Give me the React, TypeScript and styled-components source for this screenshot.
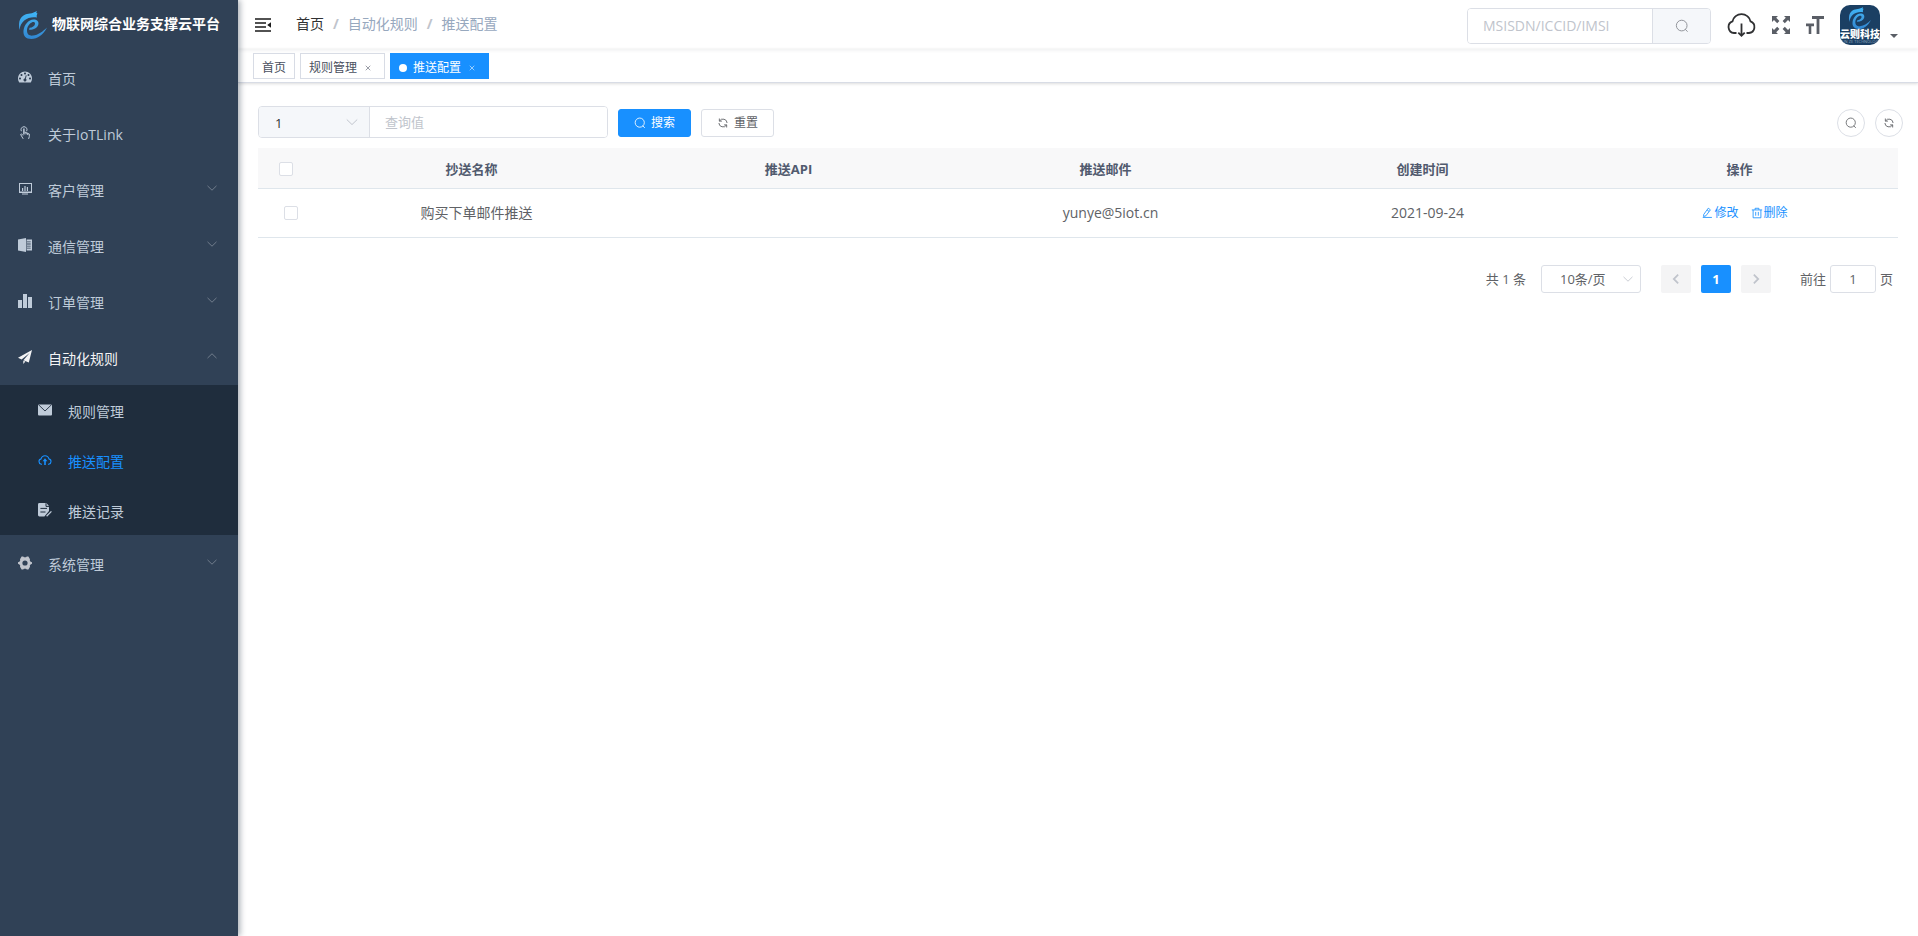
import React from "react";
import styled, { createGlobalStyle, css } from "styled-components";

const BLUE = "#1890ff";
const BORDER = "#dcdfe6";
const SIDE_TEXT = "#bfcbd9";

const GlobalStyle = createGlobalStyle`
  *, *::before, *::after { box-sizing: border-box; }
  body {
    margin: 0;
    background: #fff;
    color: #606266;
    font-family: "Open Sans", "Noto Sans CJK SC", sans-serif;
    font-size: 14px;
    line-height: 20px;
  }
  button, input, select { font: inherit; color: inherit; margin: 0; }
  button { cursor: pointer; }
  a { color: inherit; text-decoration: none; }
  ul, ol { list-style: none; margin: 0; padding: 0; }
  svg { display: block; flex: none; }
`;

/* ---------- icons ---------- */

type IconProps = { size?: number };

const stroked = (d: string, width = 64) =>
  function StrokedIcon({ size = 14 }: IconProps) {
    return (
      <svg width={size} height={size} viewBox="0 0 1024 1024" fill="none" stroke="currentColor" strokeWidth={width} aria-hidden="true">
        <path d={d} />
      </svg>
    );
  };

const SearchIcon = stroked("M100 480a390 390 0 1 0 780 0a390 390 0 1 0-780 0M745 745L920 930", 72);
const RefreshIcon = stroked("M200 130V350H420M210 350A350 350 0 0 1 862 512M824 894V674H604M814 674A350 350 0 0 1 162 512", 76);
const ArrowDown = stroked("M130 330L512 700L894 330", 72);
const ArrowUp = stroked("M130 690L512 320L894 690", 72);
const ChevronLeft = stroked("M670 200L350 512L670 824", 128);
const ChevronRight = stroked("M354 200L674 512L354 824", 128);
const EditIcon = stroked("M150 890H930M230 640L620 100L800 240L420 750L220 810ZM520 250L690 380", 72);
const TrashIcon = stroked("M70 250H954M350 240V110H674V240M180 250V920H844V250M400 420V740M624 420V740", 72);
const CloseIcon = stroked("M280 280L744 744M744 280L280 744", 80);

const DashboardIcon = () => (
  <svg width="14" height="14" viewBox="0 0 128 100" fill="currentColor" aria-hidden="true">
    <path d="M27.429 63.638c0-2.508-.893-4.65-2.679-6.424-1.786-1.775-3.94-2.662-6.464-2.662-2.524 0-4.679.887-6.465 2.662-1.785 1.774-2.678 3.916-2.678 6.424 0 2.508.893 4.65 2.678 6.424 1.786 1.775 3.94 2.662 6.465 2.662 2.524 0 4.678-.887 6.464-2.662 1.786-1.775 2.679-3.916 2.679-6.424zm13.714-31.801c0-2.508-.893-4.65-2.679-6.424-1.785-1.775-3.94-2.662-6.464-2.662-2.524 0-4.679.887-6.464 2.662-1.786 1.774-2.679 3.916-2.679 6.424 0 2.508.893 4.65 2.679 6.424 1.785 1.774 3.94 2.662 6.464 2.662 2.524 0 4.679-.888 6.464-2.662 1.786-1.775 2.679-3.916 2.679-6.424zM71.714 65.98l7.215-27.116c.285-1.23.107-2.378-.536-3.443-.643-1.064-1.56-1.762-2.75-2.094-1.19-.33-2.333-.177-3.429.462-1.095.639-1.81 1.573-2.143 2.804l-7.214 27.116c-2.857.237-5.405 1.266-7.643 3.088-2.238 1.822-3.738 4.152-4.5 6.992-.952 3.644-.476 7.098 1.429 10.364 1.905 3.265 4.69 5.37 8.357 6.317 3.667.947 7.143.474 10.429-1.42 3.285-1.892 5.404-4.66 6.357-8.305.762-2.84.619-5.607-.429-8.305-1.047-2.697-2.762-4.85-5.143-6.46zm47.143-2.342c0-2.508-.893-4.65-2.678-6.424-1.786-1.775-3.94-2.662-6.465-2.662-2.524 0-4.678.887-6.464 2.662-1.786 1.774-2.679 3.916-2.679 6.424 0 2.508.893 4.65 2.679 6.424 1.786 1.775 3.94 2.662 6.464 2.662 2.524 0 4.679-.887 6.465-2.662 1.785-1.775 2.678-3.916 2.678-6.424zm-45.714-45.43c0-2.509-.893-4.65-2.679-6.425C68.68 10.01 66.524 9.122 64 9.122c-2.524 0-4.679.887-6.464 2.661-1.786 1.775-2.679 3.916-2.679 6.425 0 2.508.893 4.65 2.679 6.424 1.785 1.774 3.94 2.662 6.464 2.662 2.524 0 4.679-.888 6.464-2.662 1.786-1.775 2.679-3.916 2.679-6.424zm32 13.629c0-2.508-.893-4.65-2.679-6.424-1.785-1.775-3.94-2.662-6.464-2.662-2.524 0-4.679.887-6.464 2.662-1.786 1.774-2.679 3.916-2.679 6.424 0 2.508.893 4.65 2.679 6.424 1.785 1.774 3.94 2.662 6.464 2.662 2.524 0 4.679-.888 6.464-2.662 1.786-1.775 2.679-3.916 2.679-6.424zM128 63.638c0 12.351-3.357 23.78-10.071 34.286-.905 1.372-2.19 2.058-3.858 2.058H13.93c-1.667 0-2.953-.686-3.858-2.058C3.357 87.465 0 76.037 0 63.638c0-8.613 1.69-16.847 5.071-24.703C8.452 31.08 13 24.312 18.714 18.634c5.715-5.68 12.524-10.199 20.429-13.559C47.048 1.715 55.333.035 64 .035c8.667 0 16.952 1.68 24.857 5.04 7.905 3.36 14.714 7.88 20.429 13.559 5.714 5.678 10.262 12.446 13.643 20.301 3.38 7.856 5.071 16.09 5.071 24.703z" />
  </svg>
);

const TouchIcon = () => (
  <svg width="14" height="14" viewBox="0 0 14 14" fill="none" stroke="currentColor" aria-hidden="true">
    <path d="M3.4 5.2A3 3 0 1 1 8.6 5.2" strokeWidth="1" />
    <path d="M5.9 2.6V8.6" strokeWidth="1.5" />
    <path d="M5 9.5L3.6 7.9L2.6 8.5L5.2 12.8M6.6 6.2L8 6.4V8.4M8 6.8L9.7 7.1V9M9.7 7.5L11.3 8V10.6L10.6 12.9" strokeWidth="1" />
  </svg>
);

const MonitorIcon = () => (
  <svg width="14" height="14" viewBox="0 0 14 14" fill="currentColor" aria-hidden="true">
    <path fillRule="evenodd" d="M1 1H14V11H1ZM2 2V9.6H13V2Z" />
    <path d="M4 6H5.2V9H4ZM6.4 4H7.6V9H6.4ZM8.8 5H10V9H8.8ZM4 11.6H10V12.6H4Z" />
  </svg>
);

const BookIcon = () => (
  <svg width="14" height="14" viewBox="0 0 14 14" fill="currentColor" aria-hidden="true">
    <path d="M0 1.4L8 0V14L0 12.6Z" />
    <path fillRule="evenodd" d="M8.6 1.6H14V12.4H8.6ZM9 3.5V4.3H12.7V3.5ZM9 5.6V6.4H12.7V5.6ZM9 7.7V8.5H12.7V7.7ZM9 9.8V10.6H12.7V9.8Z" />
  </svg>
);

const ChartIcon = () => (
  <svg width="14" height="14" viewBox="0 0 14 14" fill="currentColor" aria-hidden="true">
    <path d="M0 6H4V14H0ZM5 0H9V14H5ZM10 3H14V14H10Z" />
  </svg>
);

const PlaneIcon = () => (
  <svg width="14" height="14" viewBox="0 0 14 14" fill="currentColor" aria-hidden="true">
    <path d="M14 0L0 7.8L3.6 9.4L11.6 2.9L5.4 10.2L10.8 12.5ZM5.3 10.8V14L7.4 11.6Z" />
  </svg>
);

const MailIcon = () => (
  <svg width="14" height="14" viewBox="0 0 14 14" aria-hidden="true">
    <rect y="1.4" width="14" height="11.2" rx="1" fill="currentColor" />
    <path d="M.6 1.8L7 8L13.4 1.8" fill="none" stroke="#1f2d3d" strokeWidth=".9" />
  </svg>
);

const CloudUploadIcon = () => (
  <svg width="14" height="14" viewBox="0 0 14 14" fill="none" stroke="currentColor" strokeWidth="1.1" aria-hidden="true">
    <path d="M4 11.2H3.3A2.7 2.7 0 0 1 3.1 5.9A4 4 0 0 1 10.9 5.9A2.7 2.7 0 0 1 10.7 11.2H10" />
    <path d="M7 12V7" strokeWidth="1.6" />
    <path d="M7 5.2L9.4 8.2H4.6Z" fill="currentColor" stroke="none" />
  </svg>
);

const DocEditIcon = () => (
  <svg width="14" height="14" viewBox="0 0 14 14" aria-hidden="true">
    <path d="M1.4 0H8.4L11 3V8L6.4 13.4H1.4A1.4 1.4 0 0 1 0 12V1.4A1.4 1.4 0 0 1 1.4 0Z" fill="currentColor" />
    <path d="M2.4 5.4H9M2.4 9H7.5M8 .2V3.4H11" fill="none" stroke="#1f2d3d" strokeWidth="1" />
    <path d="M8.6 13.2L13.4 8.4" stroke="currentColor" strokeWidth="1.3" />
  </svg>
);

const GearIcon = () => (
  <svg width="14" height="14" viewBox="0 0 14 14" fill="#c0c4cc" aria-hidden="true">
    <path fillRule="evenodd" d="M3.6 .5H5.2L6 1.3H8L8.8 .5H10.4L12 3.2L11.8 4.6L12.6 5.8L14 6.2V7.8L12.6 8.4L11.8 9.6L12 10.8L10.4 13.5H8.8L8 12.7H6L5.2 13.5H3.6L2 10.8L2.2 9.6L1.4 8.4L0 7.8V6.2L1.4 5.8L2.2 4.6L2 3.2ZM7 4.4A2.6 2.6 0 1 0 7 9.6A2.6 2.6 0 1 0 7 4.4Z" />
  </svg>
);

const FoldIcon = () => (
  <svg width="16" height="14" viewBox="0 0 16 14" fill="#1a1a1a" aria-hidden="true">
    <path d="M0 .3H16V1.8H0ZM0 4.3H11V5.8H0ZM0 8.3H11V9.8H0ZM0 12.2H16V13.8H0ZM12.2 7L16 4.2V9.8Z" />
  </svg>
);

const CloudDownloadIcon = () => (
  <svg width="29" height="26" viewBox="0 0 29 26" fill="none" stroke="#303133" strokeWidth="1.8" aria-hidden="true">
    <path d="M9.5 21H7A6 6 0 0 1 5.5 9.4A9.2 9.2 0 0 1 23.5 9.4A6 6 0 0 1 22 21H19.5" />
    <path d="M14.5 11.5V23.4M11.3 20.6L14.5 23.8L17.7 20.6" />
  </svg>
);

const FullscreenIcon = () => (
  <svg width="18" height="18" viewBox="0 0 18 18" fill="#5a5e66" aria-hidden="true">
    <path d="M0 0H6L4.2 1.8L7.4 5L5.2 7.2L2 4L0 6ZM18 0V6L16 4L12.8 7.2L10.6 5L13.8 1.8L12 0ZM0 18V12L2 14L5.2 10.8L7.4 13L4.2 16.2L6 18ZM18 18H12L13.8 16.2L10.6 13L12.8 10.8L16 14L18 12Z" />
  </svg>
);

const FontSizeIcon = () => (
  <svg width="18" height="18" viewBox="0 0 18 18" fill="#5a5e66" aria-hidden="true">
    <path d="M6 0H18V3H13.4V18H10.6V3H6ZM0 7.6H8V10.2H5.3V18H2.7V10.2H0Z" />
  </svg>
);

const Swirl = ({ id, size }: { id: string; size: number }) => (
  <svg width={size} height={size} viewBox="0 0 28 28" aria-hidden="true">
    <defs>
      <linearGradient id={id} x1="0" y1="0" x2="0" y2="28" gradientUnits="userSpaceOnUse">
        <stop offset="0" stopColor="#3db6f8" />
        <stop offset=".5" stopColor="#3f9fe2" />
        <stop offset="1" stopColor="#2f86d2" />
      </linearGradient>
    </defs>
    <g fill={`url(#${id})`}>
      <path d="M.6 19C-1 12 .5 7.5 4.5 4.6C7 3 9 2.8 11 2.6C13.5 2.2 16 1.2 18 0L17.2 2L18.4 2.2L17.6 5L18 6.6C14 5.6 8.5 6.6 5.2 9.6C2.5 12 1 15 .6 19Z" />
      <path d="M28 16.5C24 24 18.5 28 12.5 28C6.5 28 4 24.5 4.5 19.5C5.2 13.5 9.5 8.6 14.5 8.4C18.5 8.3 20.3 11 19.2 14C18.2 17 14.5 19 10 18.8L10.6 16.8C13.5 16.6 15.6 15 16 13C16.2 11.2 14.6 10.6 12.8 11.4C10 12.6 8 16 8 19.5C8 23.5 10.5 25 14 24.6C19 24 24 20.5 28 16.5Z" />
    </g>
  </svg>
);

/* ---------- frame ---------- */

const Layout = styled.div`
  display: flex;
  min-height: 100vh;
`;

const Sidebar = styled.aside`
  position: relative;
  z-index: 2;
  flex: 0 0 238px;
  background: #304156;
  box-shadow: 2px 0 6px rgba(0, 21, 41, 0.35);
`;

const Brand = styled.a`
  display: flex;
  align-items: center;
  gap: 5px;
  height: 49px;
  padding-left: 19px;
`;

const BrandName = styled.h1`
  margin: 0 0 2px;
  color: #fff;
  font-size: 14px;
  line-height: 20px;
  font-weight: 700;
  white-space: nowrap;
`;

const SubMenu = styled.ul`
  background: #1f2d3d;
`;

const menuRow = css<{ $nested?: boolean; $tone?: string }>`
  display: flex;
  align-items: center;
  gap: 16px;
  width: 100%;
  height: ${(p) => (p.$nested ? 50 : 56)}px;
  padding: 0 20px 0 ${(p) => (p.$nested ? 38 : 18)}px;
  border: 0;
  background: none;
  color: ${(p) => p.$tone ?? SIDE_TEXT};
  text-align: left;
`;

const MenuLink = styled.a<{ $nested?: boolean; $tone?: string }>`
  ${menuRow}
`;

const MenuButton = styled.button<{ $nested?: boolean; $tone?: string }>`
  ${menuRow}
`;

const MenuLabel = styled.span`
  flex: 1;
  padding-top: 4px;
`;

const MenuArrow = styled.span`
  padding-bottom: 3px;
  color: #7c8795;
`;

const Main = styled.main`
  flex: 1;
  min-width: 0;
`;

const Navbar = styled.header`
  display: flex;
  align-items: center;
  justify-content: space-between;
  height: 49px;
  padding: 0 20px 0 17px;
  box-shadow: 0 1px 4px rgba(0, 21, 41, 0.08);
`;

const NavGroup = styled.div<{ $gap: number }>`
  display: flex;
  align-items: center;
  gap: ${(p) => p.$gap}px;
`;

const IconButton = styled.button`
  display: flex;
  align-items: center;
  padding: 0;
  border: 0;
  background: none;
`;

const Crumbs = styled.ol`
  display: flex;
  margin-bottom: 2px;
  color: #97a8be;

  li + li::before {
    content: "/";
    margin: 0 9px;
    color: #c0c4cc;
    font-weight: 700;
  }
  li:first-child { color: #303133; }
`;

const NavSearch = styled.form`
  display: flex;
  width: 244px;
  height: 36px;
  margin-top: 3px;
  border: 1px solid ${BORDER};
  border-radius: 4px;
  overflow: hidden;
`;

const TextInput = styled.input<{ $size: number }>`
  flex: 1;
  min-width: 0;
  padding: 0 15px;
  border: 0;
  outline: 0;
  background: #fff;
  font-size: ${(p) => p.$size}px;

  &::placeholder { color: #c0c4cc; }
`;

const AppendButton = styled.button`
  display: flex;
  align-items: center;
  justify-content: center;
  width: 58px;
  border: 0;
  border-left: 1px solid ${BORDER};
  background: #f5f7fa;
  color: #909399;
`;

const UserButton = styled.button`
  display: flex;
  align-items: flex-end;
  gap: 10px;
  padding: 0;
  border: 0;
  background: none;
`;

const Avatar = styled.span`
  display: flex;
  flex-direction: column;
  align-items: center;
  width: 40px;
  height: 40px;
  padding-top: 2px;
  border-radius: 10px;
  background: #1b3f63;
  color: #fff;
  overflow: hidden;
`;

const AvatarName = styled.span`
  font-size: 10px;
  line-height: 11px;
  font-weight: 900;
  white-space: nowrap;
`;

const AvatarNote = styled.span`
  color: #8fa6bd;
  font-size: 4px;
  line-height: 4px;
  white-space: nowrap;
`;

const Caret = styled.span`
  margin-bottom: 7px;
  border: 4px solid transparent;
  border-top-color: #5a5e66;
  border-bottom: 0;
`;

const TagsBar = styled.nav`
  display: flex;
  gap: 5px;
  height: 34px;
  padding: 4px 15px 0;
  border-bottom: 1px solid #d8dce5;
  box-shadow: 0 1px 3px rgba(0, 0, 0, 0.12), 0 0 3px rgba(0, 0, 0, 0.04);
`;

const Tag = styled.div<{ $active?: boolean }>`
  display: flex;
  align-items: center;
  height: 26px;
  padding: 3px 8px 0;
  border: 1px solid ${(p) => (p.$active ? BLUE : "#d8dce5")};
  background: ${(p) => (p.$active ? BLUE : "#fff")};
  color: ${(p) => (p.$active ? "#fff" : "#495060")};
  font-size: 12px;

  ${(p) =>
    p.$active &&
    css`
      &::before {
        content: "";
        width: 8px;
        height: 8px;
        margin-right: 6px;
        border-radius: 50%;
        background: #fff;
      }
    `}
`;

const TagClose = styled.button`
  display: flex;
  width: 16px;
  margin-left: 3px;
  padding: 3px;
  border: 0;
  background: none;
  opacity: 0.7;
`;

/* ---------- content ---------- */

const Content = styled.section`
  padding: 23px 20px 20px;
`;

const Toolbar = styled.div`
  display: flex;
  align-items: center;
  justify-content: space-between;
  height: 34px;
  margin-right: -5px;
`;

const Filters = styled.form`
  display: flex;
  align-items: center;
  gap: 10px;
`;

const FieldGroup = styled.div`
  display: flex;
  width: 350px;
  height: 32px;
  margin-bottom: 2px;
  border: 1px solid ${BORDER};
  border-radius: 4px;
  overflow: hidden;
`;

const SelectBox = styled.div<{ $kind: "prepend" | "pager" }>`
  display: grid;
  align-items: center;

  & > * { grid-area: 1 / 1; }
  & > svg {
    justify-self: end;
    margin-right: ${(p) => (p.$kind === "prepend" ? 10 : 6)}px;
    color: #c0c4cc;
    pointer-events: none;
  }

  ${(p) =>
    p.$kind === "prepend"
      ? css`
          width: 111px;
          border-right: 1px solid ${BORDER};
          background: #f5f7fa;
          color: #303133;
        `
      : css`
          width: 100px;
          height: 28px;
          border: 1px solid ${BORDER};
          border-radius: 3px;
        `}
`;

const Select = styled.select<{ $inset: number }>`
  appearance: none;
  width: 100%;
  height: 100%;
  padding: 1px 0 0 ${(p) => p.$inset}px;
  border: 0;
  outline: 0;
  background: none;
  font-size: 13px;
`;

const Button = styled.button<{ $primary?: boolean }>`
  display: flex;
  align-items: center;
  gap: 5px;
  height: 28px;
  padding: 0 15px;
  border: 1px solid ${(p) => (p.$primary ? BLUE : BORDER)};
  border-radius: 3px;
  background: ${(p) => (p.$primary ? BLUE : "#fff")};
  color: ${(p) => (p.$primary ? "#fff" : "#606266")};
  font-size: 12px;
`;

const RoundButton = styled.button`
  display: flex;
  align-items: center;
  justify-content: center;
  width: 28px;
  height: 28px;
  padding: 0;
  border: 1px solid ${BORDER};
  border-radius: 50%;
  background: #fff;
`;

const Table = styled.table`
  width: 100%;
  margin-top: 8px;
  border-collapse: collapse;
  table-layout: fixed;
  text-align: center;

  th, td {
    border-bottom: 1px solid #dfe6ec;
    vertical-align: middle;
  }
  th {
    height: 40px;
    padding: 2px 0 0;
    background: #f8f8f9;
    color: #515a6e;
    font-size: 13px;
    font-weight: 700;
  }
  td {
    height: 49px;
    padding: 0 0 0 10px;
  }
  th:first-child { width: 55px; }
`;

const Checkbox = styled.input.attrs({ type: "checkbox" })`
  appearance: none;
  display: block;
  width: 14px;
  height: 14px;
  margin: 0 auto;
  border: 1px solid ${BORDER};
  border-radius: 2px;
  background: #fff;

  &:checked { border-color: ${BLUE}; background: ${BLUE}; }
`;

const RowActions = styled.div`
  display: flex;
  justify-content: center;
  gap: 12px;
`;

const TextButton = styled.button`
  display: flex;
  align-items: center;
  gap: 1px;
  padding: 0;
  border: 0;
  background: none;
  color: ${BLUE};
  font-size: 12px;
`;

const Pagination = styled.nav`
  display: flex;
  align-items: center;
  justify-content: flex-end;
  height: 28px;
  margin-top: 27px;
  padding-right: 5px;
  font-size: 13px;
`;

const Total = styled.span`
  margin-right: 15px;
`;

const Pages = styled.div`
  display: flex;
  gap: 10px;
  margin: 0 29px 0 20px;
`;

const PageButton = styled.button<{ $current?: boolean }>`
  display: flex;
  align-items: center;
  justify-content: center;
  width: 30px;
  height: 28px;
  padding: 0;
  border: 0;
  border-radius: 2px;
  background: ${(p) => (p.$current ? BLUE : "#f4f4f5")};
  color: ${(p) => (p.$current ? "#fff" : "#c0c4cc")};
  font-weight: 700;
`;

const Jump = styled.label`
  display: flex;
  align-items: center;
  gap: 4px;
`;

const JumpInput = styled.input`
  width: 46px;
  height: 28px;
  padding: 0 3px;
  border: 1px solid ${BORDER};
  border-radius: 3px;
  text-align: center;
`;

/* ---------- data ---------- */

const menuTop = [
  { label: "首页", Icon: DashboardIcon },
  { label: "关于IoTLink", Icon: TouchIcon },
];

const menuGroups = [
  { label: "客户管理", Icon: MonitorIcon },
  { label: "通信管理", Icon: BookIcon },
  { label: "订单管理", Icon: ChartIcon },
];

const ruleItems = [
  { label: "规则管理", Icon: MailIcon },
  { label: "推送配置", Icon: CloudUploadIcon, active: true },
  { label: "推送记录", Icon: DocEditIcon },
];

const columns = ["抄送名称", "推送API", "推送邮件", "创建时间", "操作"];

const rows = [{ name: "购买下单邮件推送", api: "", mail: "yunye@5iot.cn", date: "2021-09-24" }];

type GroupProps = { label: string; Icon: React.ComponentType; open?: boolean };

const MenuGroup = ({ label, Icon, open }: GroupProps) => (
  <MenuButton type="button" aria-expanded={!!open} $tone={open ? "#f4f4f5" : undefined}>
    <Icon />
    <MenuLabel>{label}</MenuLabel>
    <MenuArrow>{open ? <ArrowUp size={12} /> : <ArrowDown size={12} />}</MenuArrow>
  </MenuButton>
);

export default function App() {
  return (
    <>
      <GlobalStyle />
      <Layout>
        <Sidebar>
          <Brand href="#">
            <Swirl id="brand" size={28} />
            <BrandName>物联网综合业务支撑云平台</BrandName>
          </Brand>
          <ul>
            {menuTop.map(({ label, Icon }) => (
              <li key={label}>
                <MenuLink href="#">
                  <Icon />
                  <MenuLabel>{label}</MenuLabel>
                </MenuLink>
              </li>
            ))}
            {menuGroups.map((g) => (
              <li key={g.label}>
                <MenuGroup {...g} />
              </li>
            ))}
            <li>
              <MenuGroup label="自动化规则" Icon={PlaneIcon} open />
              <SubMenu>
                {ruleItems.map(({ label, Icon, active }) => (
                  <li key={label}>
                    <MenuLink href="#" $nested $tone={active ? BLUE : undefined}>
                      <Icon />
                      <MenuLabel>{label}</MenuLabel>
                    </MenuLink>
                  </li>
                ))}
              </SubMenu>
            </li>
            <li>
              <MenuGroup label="系统管理" Icon={GearIcon} />
            </li>
          </ul>
        </Sidebar>

        <Main>
          <Navbar>
            <NavGroup $gap={25}>
              <IconButton type="button" aria-label="收起菜单">
                <FoldIcon />
              </IconButton>
              <Crumbs>
                <li><a href="#">首页</a></li>
                <li>自动化规则</li>
                <li>推送配置</li>
              </Crumbs>
            </NavGroup>
            <NavGroup $gap={16}>
              <NavSearch>
                <TextInput $size={14} placeholder="MSISDN/ICCID/IMSI" aria-label="MSISDN/ICCID/IMSI" />
                <AppendButton type="button" aria-label="搜索">
                  <SearchIcon size={14} />
                </AppendButton>
              </NavSearch>
              <IconButton type="button" aria-label="下载"><CloudDownloadIcon /></IconButton>
              <IconButton type="button" aria-label="全屏"><FullscreenIcon /></IconButton>
              <IconButton type="button" aria-label="字体大小"><FontSizeIcon /></IconButton>
              <UserButton type="button" aria-label="用户">
                <Avatar>
                  <Swirl id="avatar" size={22} />
                  <AvatarName>云则科技</AvatarName>
                  <AvatarNote>YUN ZE TECHNOLOGY</AvatarNote>
                </Avatar>
                <Caret />
              </UserButton>
            </NavGroup>
          </Navbar>

          <TagsBar>
            <Tag><a href="#">首页</a></Tag>
            <Tag>
              <a href="#">规则管理</a>
              <TagClose type="button" aria-label="关闭规则管理"><CloseIcon size={10} /></TagClose>
            </Tag>
            <Tag $active>
              <a href="#">推送配置</a>
              <TagClose type="button" aria-label="关闭推送配置"><CloseIcon size={10} /></TagClose>
            </Tag>
          </TagsBar>

          <Content>
            <Toolbar>
              <Filters>
                <FieldGroup>
                  <SelectBox $kind="prepend">
                    <Select $inset={16} aria-label="查询条件" defaultValue="1">
                      <option>1</option>
                    </Select>
                    <ArrowDown size={14} />
                  </SelectBox>
                  <TextInput $size={13} placeholder="查询值" aria-label="查询值" />
                </FieldGroup>
                <Button type="button" $primary><SearchIcon size={12} />搜索</Button>
                <Button type="button"><RefreshIcon size={12} />重置</Button>
              </Filters>
              <NavGroup $gap={10}>
                <RoundButton type="button" aria-label="隐藏搜索"><SearchIcon size={12} /></RoundButton>
                <RoundButton type="button" aria-label="刷新"><RefreshIcon size={12} /></RoundButton>
              </NavGroup>
            </Toolbar>

            <Table>
              <thead>
                <tr>
                  <th><Checkbox aria-label="全选" /></th>
                  {columns.map((c) => <th key={c}>{c}</th>)}
                </tr>
              </thead>
              <tbody>
                {rows.map((r) => (
                  <tr key={r.name}>
                    <td><Checkbox aria-label={r.name} /></td>
                    <td>{r.name}</td>
                    <td>{r.api}</td>
                    <td>{r.mail}</td>
                    <td>{r.date}</td>
                    <td>
                      <RowActions>
                        <TextButton type="button"><EditIcon size={12} />修改</TextButton>
                        <TextButton type="button"><TrashIcon size={12} />删除</TextButton>
                      </RowActions>
                    </td>
                  </tr>
                ))}
              </tbody>
            </Table>

            <Pagination aria-label="分页">
              <Total>共 1 条</Total>
              <SelectBox $kind="pager">
                <Select $inset={18} aria-label="每页条数" defaultValue="10条/页">
                  <option>10条/页</option>
                </Select>
                <ArrowDown size={12} />
              </SelectBox>
              <Pages>
                <PageButton type="button" aria-label="上一页"><ChevronLeft size={14} /></PageButton>
                <PageButton type="button" $current>1</PageButton>
                <PageButton type="button" aria-label="下一页"><ChevronRight size={14} /></PageButton>
              </Pages>
              <Jump>
                前往
                <JumpInput defaultValue="1" />
                页
              </Jump>
            </Pagination>
          </Content>
        </Main>
      </Layout>
    </>
  );
}
